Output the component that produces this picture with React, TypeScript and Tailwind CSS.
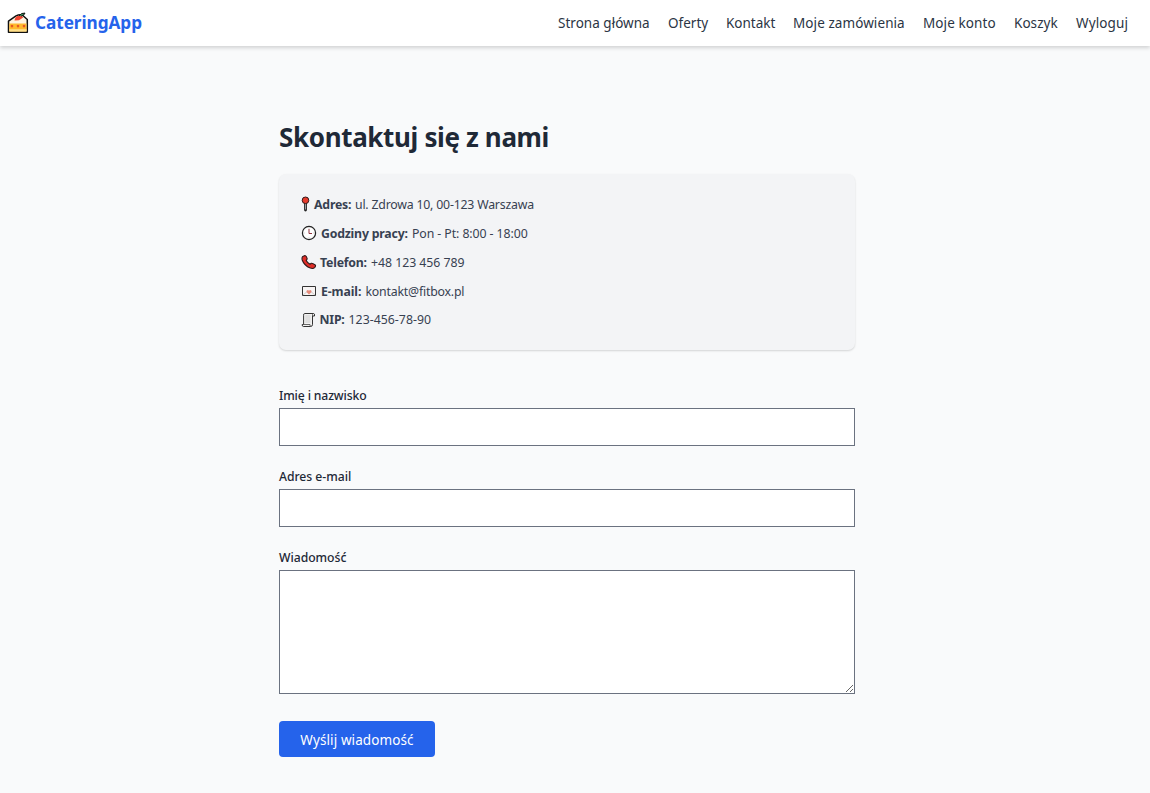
import type { ReactNode } from 'react';

const navItems = [
  { label: 'Strona główna', box: 'w-[110px] tracking-[0.02px]' },
  { label: 'Oferty', box: 'w-[58px] tracking-[0px]' },
  { label: 'Kontakt', box: 'w-[67px] tracking-[0px]' },
  { label: 'Moje zamówienia', box: 'w-[130px] tracking-[0.08px]' },
  { label: 'Moje konto', box: 'w-[91px] tracking-[0.1px]' },
  { label: 'Koszyk', box: 'w-[62px] tracking-[0.05px]' },
  { label: 'Wyloguj', box: 'w-[52px] tracking-[0.12px]' },
];

function CakeIcon() {
  return (
    <svg className="h-[22px] w-[22px] shrink-0" viewBox="0 0 22 22">
      <path d="M1.5 9.2 L9 3.8 Q12 2.3 15 2.8 L20.3 7.5 V20.2 H1.5Z" fill="#fff4df" stroke="#111" strokeWidth="1.5" strokeLinejoin="round" />
      <path d="M2.3 11.5H19.5V19.4H2.3Z" fill="#ffb92e" />
      <path d="M2.3 17.2H19.5V19.4H2.3Z" fill="#ffe08a" />
      <path d="M4 13.2l2 2m0-2l-2 2M10 13.2l2 2m0-2l-2 2M16 13.2l2 2m0-2l-2 2" stroke="#e75524" strokeWidth="1.2" />
      <path d="M7.5 8.5Q8 4.5 11.5 3.8Q15.5 3.2 16.2 5.6L12 8.2Z" fill="#ef4632" />
      <path d="M12 3.8Q14.5 .6 18 1.1Q17 3.8 14.2 4.1" fill="#32945a" stroke="#111" strokeWidth="1" />
    </svg>
  );
}

function PinIcon() {
  return (
    <svg className="h-4 w-[9px] shrink-0" viewBox="0 0 9 16">
      <path d="M4.5 7V14" stroke="#222" strokeWidth="2.8" strokeLinecap="round" />
      <path d="M4.5 7V13.5" stroke="#9ba0a5" strokeWidth="1" />
      <circle cx="4.5" cy="4.3" r="3.3" fill="#e63b2c" stroke="#32191a" strokeWidth="1" />
    </svg>
  );
}

function ClockIcon() {
  return (
    <svg className="h-4 w-4 shrink-0" viewBox="0 0 16 16">
      <circle cx="8" cy="8" r="6.6" fill="#fff" stroke="#222" strokeWidth="1.2" />
      <path d="M8 4V8.5H11" fill="none" stroke="#8e3540" strokeWidth="1" />
      <path d="M8 2.6v.8M8 12.6v.8M2.6 8h.8M12.6 8h.8" stroke="#777" strokeWidth=".7" />
    </svg>
  );
}

function PhoneIcon() {
  return (
    <svg className="h-4 w-4 shrink-0" viewBox="0 0 16 16">
      <path d="M1.8 2.4L4 1.5Q5.4 1.6 6.1 4.4Q6.3 5.3 5.2 6.4Q6.5 8.8 9 10.2L10.3 9.3Q11.3 8.9 14.3 11Q15 11.8 13.8 13.3Q12.2 15.2 9.3 14.1Q3.2 11.6 1.2 6Q.6 3.5 1.8 2.4Z" fill="#e02d28" stroke="#301718" strokeWidth="1.1" strokeLinejoin="round" />
    </svg>
  );
}

function LetterIcon() {
  return (
    <svg className="h-4 w-4 shrink-0" viewBox="0 0 16 16">
      <path d="M1.5 3.5H14.5V12.5H1.5Z" fill="#f7f4f4" stroke="#333" />
      <path d="M2 12L6 8.7M14 12L10 8.7" stroke="#bcb8b8" strokeWidth=".7" />
      <path d="M8 11.4L5.5 9Q5.2 7 7 7L8 7.8L9 7Q10.8 7 10.5 9Z" fill="#e58a7a" />
    </svg>
  );
}

function ReceiptIcon() {
  return (
    <svg className="h-4 w-[15px] shrink-0" viewBox="0 0 15 16">
      <path d="M3.6 1.5H12.5Q14 1.5 13.5 4H11.5V12.7Q11.4 14.5 9.5 14.5H2.3Q1 14.5 1.2 12.5H2.6V3.2Q2.6 1.5 3.6 1.5Z" fill="#f1f1f1" stroke="#333" strokeLinejoin="round" />
      <path d="M11.5 4V2.5Q11.5 1.5 12.5 1.5M2.6 12.5H9Q9 14.5 9.8 14.5" fill="none" stroke="#444" strokeWidth=".8" />
      <path d="M4.3 4H9.5M4.3 6H9.5M4.3 8H9.5M4.3 10H9.5" stroke="#bbb" strokeWidth=".7" />
    </svg>
  );
}

interface DetailProps {
  icon: ReactNode;
  label: string;
  value: string;
  labelBox: string;
  valueSpacing: string;
}

function Detail({ icon, label, value, labelBox, valueSpacing }: DetailProps) {
  return (
    <p className="flex h-[28.8px] items-center whitespace-nowrap">
      {icon}
      <strong className={`${labelBox} shrink-0 pt-[2px] font-bold`}>{label}</strong>
      <span className={`${valueSpacing} pt-[2px]`}>{value}</span>
    </p>
  );
}

export default function App() {
  return (
    <div className="min-h-[793px] bg-[#f9fafb] font-['Noto_Sans','Open_Sans',sans-serif] text-[#1f2937]">
      <header className="flex h-[46px] items-center justify-between bg-white pr-[22px] pl-[7px] shadow-[0_2px_4px_rgba(0,0,0,0.16)]">
        <a href="#" className="flex items-center gap-[6px] text-[17.2px] font-bold whitespace-nowrap text-[#2563eb]">
          <CakeIcon />
          <span className="tracking-[-0.05px]">CateringApp</span>
        </a>
        <nav className="flex text-[13.5px] text-[#2b3544]">
          {navItems.map((item) => (
            <a key={item.label} href="#" className={`${item.box} shrink-0 whitespace-nowrap`}>{item.label}</a>
          ))}
        </nav>
      </header>
      <main className="ml-[279px] w-[576px] pt-[73px]">
        <h1 className="h-[36px] text-[26px] leading-[36px] font-bold tracking-[-0.35px] whitespace-nowrap">Skontaktuj się z nami</h1>
        <section className="mt-[19px] h-[176px] rounded-[7px] bg-[#f3f4f6] px-[22px] pt-4 text-[12.3px] text-[#374151] shadow-[0_1px_2px_rgba(0,0,0,0.15)]">
          <Detail icon={<PinIcon />} label="Adres:" value="ul. Zdrowa 10, 00-123 Warszawa" labelBox="ml-[4px] w-[41px] tracking-[-0.2px]" valueSpacing="tracking-[-0.2px]" />
          <Detail icon={<ClockIcon />} label="Godziny pracy:" value="Pon - Pt: 8:00 - 18:00" labelBox="ml-[4px] w-[91px] tracking-[-0.2px]" valueSpacing="tracking-[-0.08px]" />
          <Detail icon={<PhoneIcon />} label="Telefon:" value="+48 123 456 789" labelBox="ml-[3px] w-[51px] tracking-[-0.2px]" valueSpacing="tracking-[-0.03px]" />
          <Detail icon={<LetterIcon />} label="E-mail:" value="kontakt@fitbox.pl" labelBox="ml-[4px] w-[44.5px] tracking-[-0.1px]" valueSpacing="tracking-[-0.2px]" />
          <Detail icon={<ReceiptIcon />} label="NIP:" value="123-456-78-90" labelBox="ml-[3.5px] w-[29px] tracking-[-0.2px]" valueSpacing="tracking-[0.03px]" />
        </section>
        <form className="mt-[36px] text-[12.2px]" onSubmit={(event) => event.preventDefault()}>
          <label className="block h-[81px]">
            <span className="block h-[22px] leading-[20px] font-medium tracking-[-0.13px]">Imię i nazwisko</span>
            <input className="block h-[38px] w-full border border-[#6b7280] bg-white px-3 outline-none" />
          </label>
          <label className="block h-[81px]">
            <span className="block h-[22px] leading-[20px] font-medium tracking-[-0.03px]">Adres e-mail</span>
            <input type="email" className="block h-[38px] w-full border border-[#6b7280] bg-white px-3 outline-none" />
          </label>
          <label className="block">
            <span className="block h-[22px] leading-[20px] font-medium tracking-[-0.03px]">Wiadomość</span>
            <textarea className="block h-[124px] w-full resize-y border border-[#6b7280] bg-white px-3 outline-none" />
          </label>
          <button type="submit" className="mt-[27px] flex h-[36px] w-[156px] items-center justify-center rounded-[4px] bg-[#2563eb] pt-[2px] text-[13.5px] tracking-[0.1px] whitespace-nowrap text-white">
            Wyślij wiadomość
          </button>
        </form>
      </main>
    </div>
  );
}
